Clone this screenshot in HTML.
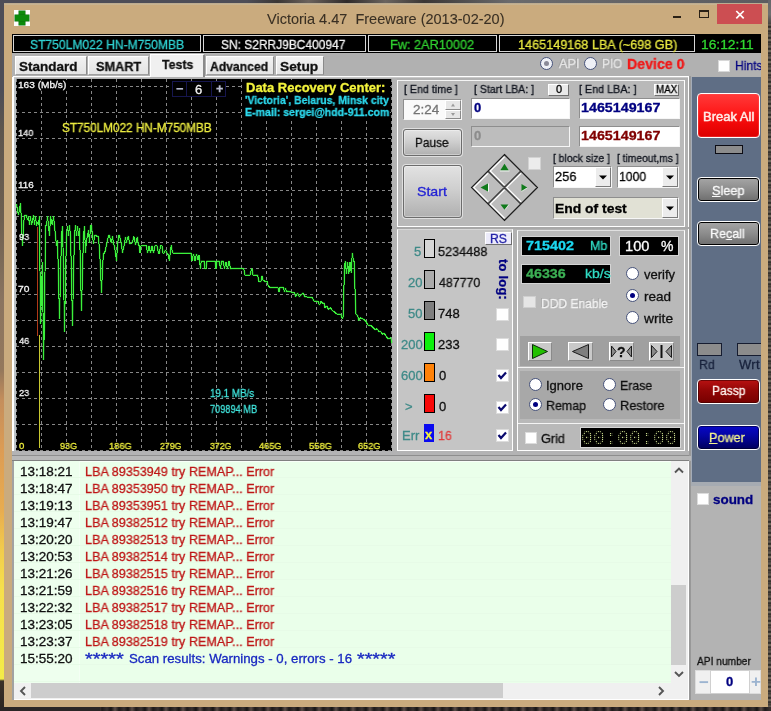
<!DOCTYPE html>
<html lang="en"><head><meta charset="utf-8"><title>Victoria 4.47 Freeware (2013-02-20)</title>
<style>
html,body{margin:0;padding:0}
body{width:771px;height:711px;overflow:hidden;position:relative;background:#2b2522;font-family:'Liberation Sans',sans-serif;font-size:13px}
div{position:absolute;box-sizing:border-box}
.t{white-space:pre;margin:0;padding:0;transform-origin:0 0;will-change:transform;-webkit-text-stroke:0.3px}
.ov{position:absolute;left:0;top:0;pointer-events:none}
u{text-decoration:underline}

</style></head>
<body>
<div style="left:0px;top:0px;width:771px;height:3px;background:linear-gradient(90deg,#4d4d57 0,#4d4d57 32%,#3a3634 36%,#6b625c 40%,#2e2a2a 45%,#6a645f 50%,#3a3634 55%,#6a6a6c 66%,#5c5c60 100%)"></div>
<div style="left:0px;top:0px;width:4px;height:711px;background:linear-gradient(180deg,#4d4d57 0,#4d4d57 90px,#5e564e 130px,#6f6050 220px,#8a7460 300px,#94785c 370px,#c48e5c 400px,#dc9c54 450px,#e8ac50 510px,#f2cc4c 550px,#f6e04c 590px,#f4ec48 679px,#3a3028 681px,#2b2522 100%)"></div>
<div style="left:768px;top:0px;width:3px;height:711px;background:repeating-linear-gradient(180deg,#3a3430 0,#6a6258 3px,#1e1c1a 5px,#8a8070 7px,#2a2624 9px,#5a5248 11px)"></div>
<div style="left:768px;top:0px;width:3px;height:24px;background:linear-gradient(180deg,#66666a 0,#707070 60%,#4a4642 100%)"></div>
<div style="left:0px;top:707px;width:771px;height:4px;background:repeating-linear-gradient(90deg,#1e1a1a 0,#3a3230 5px,#161414 9px,#5a4c46 13px,#1e1a1a 17px)"></div>
<div style="left:0px;top:707px;width:100px;height:4px;background:#2b2626"></div>
<div style="left:4px;top:3px;width:764px;height:704px;background:#caab7e"></div>
<div style="left:4px;top:3px;width:764px;height:2px;background:linear-gradient(180deg,#b8a890 0,#cdb791 100%)"></div>
<div style="left:14px;top:10px;width:16px;height:16px;background:#fdfdfd"></div>
<div style="left:19px;top:11px;width:6px;height:14px;background:#0b8a0b;box-shadow:0 0 0 .5px #0a700a"></div>
<div style="left:15px;top:15px;width:14px;height:6px;background:#0b8a0b;box-shadow:0 0 0 .5px #0a700a"></div>
<div style="left:19px;top:15px;width:6px;height:6px;background:#0b8a0b"></div>
<div style="left:673px;top:16px;width:8px;height:2px;background:#2a2116"></div>
<div style="left:699px;top:10px;width:10px;height:8px;border:1px solid #2a2116;border-top-width:2px"></div>
<div style="left:717px;top:4px;width:45px;height:20px;background:#cc4e52"></div>
<div style="left:12px;top:34px;width:749px;height:666px;background:#b1b1b1"></div>
<div style="left:12px;top:34px;width:749px;height:19px;background:#000"></div>
<div style="left:13px;top:35px;width:188px;height:17px;border:1px solid #d6d6d6"></div>
<div style="left:203px;top:35px;width:163px;height:17px;border:1px solid #d6d6d6"></div>
<div style="left:368px;top:35px;width:129px;height:17px;border:1px solid #d6d6d6"></div>
<div style="left:499px;top:35px;width:196px;height:17px;border:1px solid #d6d6d6"></div>
<div style="left:15px;top:56px;width:72px;height:19px;background:linear-gradient(180deg,#f2f2f2 0,#e4e4e4 100%);border-right:1px solid #8a8a8a;border-bottom:1px solid #a0a0a0;border-left:1px solid #fff;border-top:1px solid #fff"></div>
<div style="left:88px;top:56px;width:61px;height:19px;background:linear-gradient(180deg,#f2f2f2 0,#e4e4e4 100%);border-right:1px solid #8a8a8a;border-bottom:1px solid #a0a0a0;border-left:1px solid #fff;border-top:1px solid #fff"></div>
<div style="left:206px;top:56px;width:68px;height:19px;background:linear-gradient(180deg,#f2f2f2 0,#e4e4e4 100%);border-right:1px solid #8a8a8a;border-bottom:1px solid #a0a0a0;border-left:1px solid #fff;border-top:1px solid #fff"></div>
<div style="left:276px;top:56px;width:48px;height:19px;background:linear-gradient(180deg,#f2f2f2 0,#e4e4e4 100%);border-right:1px solid #8a8a8a;border-bottom:1px solid #a0a0a0;border-left:1px solid #fff;border-top:1px solid #fff"></div>
<div style="left:150px;top:54px;width:55px;height:23px;background:#f0f0f0;border-right:2px solid #8a8a8a;border-left:1px solid #fff;border-top:1px solid #fff"></div>
<div style="left:13px;top:76px;width:137px;height:2px;background:linear-gradient(180deg,#fff 0,#fff 1px,#c8c8c8 1px)"></div>
<div style="left:205px;top:76px;width:484px;height:1px;background:#fff"></div>
<div style="left:205px;top:77px;width:484px;height:1px;background:#c8c8c8"></div>
<div style="left:688px;top:76px;width:1px;height:380px;background:#fff"></div>
<div style="left:689px;top:76px;width:2px;height:380px;background:#9a9a9a"></div>
<div style="left:12px;top:77px;width:2px;height:378px;background:#fff"></div>
<div style="left:14px;top:78px;width:2px;height:377px;background:#bcc2c6"></div>
<div style="left:539.5px;top:57.0px;width:13px;height:13px;border-radius:50%;border:1px solid #46527a;background:#eef0f6"></div>
<div style="left:543.5px;top:61.0px;width:5px;height:5px;border-radius:50%;background:#8a8a98"></div>
<div style="left:583.5px;top:57.0px;width:13px;height:13px;border-radius:50%;border:1px solid #46527a;background:#eef0f6"></div>
<div style="left:718px;top:60px;width:12px;height:12px;background:#fff;border:1px solid #d8d8d8"></div>
<div style="left:730px;top:54px;width:31px;height:22px;overflow:hidden"><div class="t" style="left:4.6px;top:4px;font-size:13px;line-height:16px;color:#000080;transform:scaleX(0.93)">Hints</div></div>
<div style="left:16px;top:79px;width:376px;height:372px;background:#000"></div>
<div style="left:392px;top:78px;width:5px;height:378px;background:#b4b4b4"></div>
<div style="left:12px;top:451px;width:677px;height:4px;background:#b3b3b4"></div>
<div style="left:12px;top:455px;width:677px;height:1px;background:#8e8e8e"></div>
<div style="left:12px;top:456px;width:679px;height:4px;background:#b8b8b8"></div>
<div style="left:12px;top:460px;width:677px;height:1px;background:#808080"></div>
<div style="left:397px;top:80px;width:288px;height:147px;background:#b9b9b9;border:1px solid #fff;border-top-color:#f4f4f4"></div>
<div style="left:397px;top:227px;width:292px;height:2px;background:#a8a8a8"></div>
<div style="left:548px;top:84px;width:21px;height:12px;background:#e9e9e9;border:1px solid;border-color:#fff #6e6e6e #6e6e6e #fff"></div>
<div style="left:654px;top:84px;width:25px;height:12px;background:#e9e9e9;border:1px solid;border-color:#fff #6e6e6e #6e6e6e #fff"></div>
<div style="left:403px;top:99px;width:59px;height:21px;background:#fafafa;border:1px solid;border-color:#8e8e8e #f6f6f6 #f6f6f6 #8e8e8e"></div>
<div style="left:445px;top:100px;width:16px;height:10px;background:#e6e6e6;border:1px solid;border-color:#fff #8a8a8a #8a8a8a #fff"></div>
<div style="left:445px;top:110px;width:16px;height:9px;background:#e6e6e6;border:1px solid;border-color:#fff #8a8a8a #8a8a8a #fff"></div>
<div style="left:471px;top:98px;width:99px;height:21px;background:#fff;border:1px solid;border-color:#8e8e8e #f6f6f6 #f6f6f6 #8e8e8e"></div>
<div style="left:579px;top:98px;width:101px;height:21px;background:#fff;border:1px solid;border-color:#8e8e8e #f6f6f6 #f6f6f6 #8e8e8e"></div>
<div style="left:471px;top:126px;width:99px;height:21px;background:#bdbdbd;border:1px solid;border-color:#8e8e8e #f6f6f6 #f6f6f6 #8e8e8e"></div>
<div style="left:579px;top:126px;width:101px;height:21px;background:#fff;border:1px solid;border-color:#8e8e8e #f6f6f6 #f6f6f6 #8e8e8e"></div>
<div style="left:403px;top:129px;width:59px;height:27px;background:linear-gradient(180deg,#e2e2e2 0,#cfcfcf 45%,#b0b0b0 100%);border:1px solid #6c6c6c;border-radius:3px;box-shadow:0 0 0 1px rgba(255,255,255,.55), inset 0 0 0 1px rgba(255,255,255,.35)"></div>
<div style="left:403px;top:165px;width:59px;height:53px;background:linear-gradient(180deg,#e2e2e2 0,#cfcfcf 45%,#b0b0b0 100%);border:1px solid #6c6c6c;border-radius:3px;box-shadow:0 0 0 1px rgba(255,255,255,.55), inset 0 0 0 1px rgba(255,255,255,.35)"></div>
<div style="left:528px;top:157px;width:13px;height:13px;background:#ececec;border:1px solid #d2d2d2"></div>
<div style="left:553px;top:166px;width:59px;height:22px;background:#fff;border:1px solid;border-color:#8e8e8e #f6f6f6 #f6f6f6 #8e8e8e"></div>
<div style="left:595px;top:167px;width:16px;height:20px;background:#ececec;border:1px solid;border-color:#fff #7a7a7a #7a7a7a #fff"></div>
<div style="left:617px;top:166px;width:62px;height:22px;background:#fff;border:1px solid;border-color:#8e8e8e #f6f6f6 #f6f6f6 #8e8e8e"></div>
<div style="left:662px;top:167px;width:16px;height:20px;background:#ececec;border:1px solid;border-color:#fff #7a7a7a #7a7a7a #fff"></div>
<div style="left:553px;top:197px;width:126px;height:22px;background:#e1e1d5;border:1px solid;border-color:#8e8e8e #f6f6f6 #f6f6f6 #8e8e8e"></div>
<div style="left:662px;top:198px;width:16px;height:20px;background:#ececec;border:1px solid;border-color:#fff #7a7a7a #7a7a7a #fff"></div>
<div style="left:397px;top:229px;width:116px;height:222px;background:#c5c5c5;border:1px solid #fff;border-top-color:#d8d8d8"></div>
<div style="left:485px;top:232px;width:27px;height:13px;background:#ecebfa;border:1px solid;border-color:#fff #6e6e6e #6e6e6e #fff"></div>
<div style="left:424px;top:239px;width:10.5px;height:19px;background:#d6d6d6;border:1px solid #000"></div>
<div style="left:424px;top:270px;width:10.5px;height:19px;background:#ababab;border:1px solid #000"></div>
<div style="left:424px;top:301px;width:10.5px;height:19px;background:#7f7f7f;border:1px solid #000"></div>
<div style="left:424px;top:332px;width:10.5px;height:19px;background:#0df00d;border:1px solid #000"></div>
<div style="left:424px;top:363px;width:10.5px;height:19px;background:#ff8208;border:1px solid #000"></div>
<div style="left:424px;top:394px;width:10.5px;height:19px;background:#f80808;border:1px solid #000"></div>
<div style="left:424px;top:424px;width:10px;height:18px;background:#0a0af0"></div>
<div class="t" style="left:496px;top:259px;width:14px;height:44px;font-size:13px;font-weight:bold;color:#000080;writing-mode:vertical-rl;line-height:14px;letter-spacing:0.2px">to log:</div>
<div style="left:496px;top:308px;width:13px;height:13px;background:#fff;border:1px solid #dcdcdc"></div>
<div style="left:496px;top:338px;width:13px;height:13px;background:#fff;border:1px solid #dcdcdc"></div>
<div style="left:496px;top:369px;width:13px;height:13px;background:#fff;border:1px solid #dcdcdc"></div>
<div style="left:496px;top:401px;width:13px;height:13px;background:#fff;border:1px solid #dcdcdc"></div>
<div style="left:496px;top:429px;width:13px;height:13px;background:#fff;border:1px solid #dcdcdc"></div>
<div style="left:517px;top:230px;width:168px;height:221px;background:#b9b9b9;border:1px solid #fff;border-top-color:#e0e0e0"></div>
<div style="left:521px;top:236px;width:90px;height:20px;background:#000;border:1px solid #d4d4d4"></div>
<div style="left:521px;top:264px;width:90px;height:20px;background:#000;border:1px solid #d4d4d4"></div>
<div style="left:619px;top:236px;width:60px;height:20px;background:#000;border:1px solid #d4d4d4"></div>
<div style="left:523px;top:296px;width:13px;height:12px;background:#e6e6e6;border:1px solid #d0d0d0"></div>
<div style="left:626.2px;top:267.0px;width:13px;height:13px;border-radius:50%;border:1px solid #46527a;background:#fff"></div>
<div style="left:626.2px;top:289.1px;width:13px;height:13px;border-radius:50%;border:1px solid #46527a;background:#fff"></div>
<div style="left:630.2px;top:293.1px;width:5px;height:5px;border-radius:50%;background:#000080"></div>
<div style="left:626.2px;top:311.2px;width:13px;height:13px;border-radius:50%;border:1px solid #46527a;background:#fff"></div>
<div style="left:520px;top:336px;width:160px;height:30px;background:#a0a0a0"></div>
<div style="left:518px;top:367px;width:166px;height:1px;background:#f4f4f4"></div>
<div style="left:528px;top:342px;width:24px;height:19px;background:#c9c9c9;border:1px solid;border-color:#fff #8a8a8a #8a8a8a #fff"></div>
<div style="left:568px;top:342px;width:25px;height:19px;background:#c9c9c9;border:1px solid;border-color:#fff #8a8a8a #8a8a8a #fff"></div>
<div style="left:609px;top:342px;width:25px;height:19px;background:#c9c9c9;border:1px solid;border-color:#fff #8a8a8a #8a8a8a #fff"></div>
<div style="left:649px;top:342px;width:25px;height:19px;background:#c9c9c9;border:1px solid;border-color:#fff #8a8a8a #8a8a8a #fff"></div>
<div style="left:520px;top:371px;width:160px;height:48px;background:#a8a8a8"></div>
<div style="left:518px;top:423px;width:166px;height:1px;background:#f4f4f4"></div>
<div style="left:528.7px;top:377.9px;width:13px;height:13px;border-radius:50%;border:1px solid #46527a;background:#fff"></div>
<div style="left:528.7px;top:397.8px;width:13px;height:13px;border-radius:50%;border:1px solid #46527a;background:#fff"></div>
<div style="left:532.7px;top:401.8px;width:5px;height:5px;border-radius:50%;background:#000080"></div>
<div style="left:602.9px;top:377.9px;width:13px;height:13px;border-radius:50%;border:1px solid #46527a;background:#fff"></div>
<div style="left:602.9px;top:397.8px;width:13px;height:13px;border-radius:50%;border:1px solid #46527a;background:#fff"></div>
<div style="left:525px;top:432px;width:12px;height:12px;background:#fff;border:1px solid #dcdcdc"></div>
<div style="left:580px;top:427px;width:101px;height:21px;background:#000;border:1px solid #d8d8d8"></div>
<div style="left:581px;top:428px;width:99px;height:19px;overflow:hidden"><div class="t" style="left:0px;top:-0.5px;font-family:'Liberation Mono',monospace;font-size:20px;line-height:21px;letter-spacing:0px;color:#c8d88c;-webkit-text-stroke:0">00:00:00</div><div style="left:0;top:0;width:99px;height:19px;background:repeating-linear-gradient(90deg,rgba(0,0,0,.82) 0,rgba(0,0,0,.82) 1px,transparent 1px,transparent 2px),repeating-linear-gradient(180deg,rgba(0,0,0,.82) 0,rgba(0,0,0,.82) 1px,transparent 1px,transparent 2px)"></div></div>
<div style="left:691px;top:77px;width:70px;height:405px;background:#5f6e85;border-left:1px solid #a4acb8"></div>
<div style="left:691px;top:482px;width:70px;height:4px;background:#a6abb2"></div>
<div style="left:691px;top:486px;width:70px;height:214px;background:#b3b3b3"></div>
<div style="left:689px;top:461px;width:2px;height:239px;background:#989898"></div>
<div style="left:697px;top:93px;width:63px;height:45px;background:linear-gradient(180deg,#ff3a3a 0,#ff1c1c 40%,#f00808 70%,#dc0000 100%);border:1px solid #fff;border-radius:4px;box-shadow:inset 0 0 0 1px rgba(255,80,80,.4)"></div>
<div style="left:715px;top:145px;width:28px;height:9px;background:#8c8c8c;border:1px solid #0c0c14"></div>
<div style="left:697px;top:177px;width:63px;height:25px;background:linear-gradient(180deg,#a6a6a6 0,#8c8c8c 50%,#6e6e6e 100%);border:1px solid #fff;border-radius:4px;box-shadow:inset 0 0 0 1px #000"></div>
<div style="left:697px;top:221px;width:63px;height:25px;background:linear-gradient(180deg,#a6a6a6 0,#8c8c8c 50%,#6e6e6e 100%);border:1px solid #fff;border-radius:4px;box-shadow:inset 0 0 0 1px #000"></div>
<div style="left:697px;top:343px;width:25px;height:13px;background:#8c8c8c;border:1px solid #161c30"></div>
<div style="left:737px;top:343px;width:25px;height:13px;background:#8c8c8c;border:1px solid #161c30"></div>
<div style="left:761px;top:343px;width:7px;height:13px;background:#caab7e"></div>
<div style="left:735px;top:356px;width:26px;height:18px;overflow:hidden"><div class="t" style="left:4px;top:0px;font-size:13px;line-height:17px;color:#18223c;letter-spacing:0.3px">Wrt</div></div>
<div style="left:697px;top:379px;width:63px;height:25px;background:linear-gradient(180deg,#b81212 0,#920606 45%,#760000 100%);border:1px solid #fff;border-radius:4px;box-shadow:inset 0 0 0 1px rgba(60,0,0,.6)"></div>
<div style="left:697px;top:425px;width:63px;height:25px;background:linear-gradient(180deg,#0808c8 0,#0404a0 45%,#00005c 100%);border:1px solid #fff;border-radius:4px;box-shadow:inset 0 0 0 1px rgba(0,0,40,.6)"></div>
<div style="left:697px;top:493px;width:12px;height:12px;background:#fff;border:1px solid #dcdcdc"></div>
<div style="left:695px;top:670px;width:66px;height:24px;background:#f0f0f0;border:1px solid #dcdcdc"></div>
<div style="left:710px;top:670px;width:40px;height:24px;background:#fff;border:1px solid #d0d0d0"></div>
<div style="left:750px;top:671px;width:11px;height:22px;overflow:hidden"><div class="t" style="left:0.5px;top:0.5px;font-size:17px;line-height:20px;font-weight:bold;color:#9cb4d0;-webkit-text-stroke:0">+</div></div>
<div style="left:12px;top:461px;width:677px;height:239px;background:#fff;border-left:2px solid #a2a2a2"></div>
<div style="left:14px;top:461px;width:657px;height:222px;background:#eaffea;border-top:1px solid #f8fff8"></div>
<div style="left:14px;top:461px;width:66px;height:222px;background:#eeffee;border-right:1px solid #f4fff4"></div>
<div style="left:14px;top:461px;width:657px;height:222px;overflow:hidden"><div style="left:0;top:16px;width:657px;height:1px;background:#e7fbe7"></div><div style="left:0;top:33px;width:657px;height:1px;background:#e7fbe7"></div><div style="left:0;top:50px;width:657px;height:1px;background:#e7fbe7"></div><div style="left:0;top:67px;width:657px;height:1px;background:#e7fbe7"></div><div style="left:0;top:84px;width:657px;height:1px;background:#e7fbe7"></div><div style="left:0;top:101px;width:657px;height:1px;background:#e7fbe7"></div><div style="left:0;top:118px;width:657px;height:1px;background:#e7fbe7"></div><div style="left:0;top:135px;width:657px;height:1px;background:#e7fbe7"></div><div style="left:0;top:152px;width:657px;height:1px;background:#e7fbe7"></div><div style="left:0;top:169px;width:657px;height:1px;background:#e7fbe7"></div><div style="left:0;top:186px;width:657px;height:1px;background:#e7fbe7"></div><div style="left:0;top:203px;width:657px;height:1px;background:#e7fbe7"></div><div style="left:0;top:220px;width:657px;height:1px;background:#e7fbe7"></div></div>
<div style="left:671px;top:461px;width:17px;height:222px;background:#f0f0f0"></div>
<div style="left:671px;top:585px;width:15px;height:80px;background:#cdcdcd"></div>
<div style="left:14px;top:683px;width:674px;height:16px;background:#f0f0f0"></div>
<div style="left:31px;top:683px;width:472px;height:15px;background:#cdcdcd"></div>
<svg class="ov" width="771" height="711" viewBox="0 0 771 711">
<path d="M736.3 11 L743.7 18.4 M743.7 11 L736.3 18.4" stroke="#fff" stroke-width="1.7" fill="none"/>
<path d="M16.5 79V451M41.5 79V451M66.5 79V451M91.5 79V451M116.5 79V451M141.5 79V451M166.5 79V451M191.5 79V451M216.5 79V451M241.5 79V451M266.5 79V451M291.5 79V451M316.5 79V451M341.5 79V451M366.5 79V451M391.5 79V451M16 86.5H392M16 112.5H392M16 138.5H392M16 164.5H392M16 190.5H392M16 216.5H392M16 242.5H392M16 268.5H392M16 294.5H392M16 320.5H392M16 346.5H392M16 372.5H392M16 398.5H392M16 424.5H392M16 450.5H392" stroke="#868686" stroke-width="1" stroke-dasharray="3 3" fill="none" shape-rendering="crispEdges"/>
<rect x="244" y="80" width="146" height="39" fill="#000"/>
<rect x="17" y="80" width="51" height="10" fill="#000"/>
<path d="M37.5 227V336" stroke="#b03a18" stroke-width="1" fill="none" shape-rendering="crispEdges"/>
<path d="M39.5 335V448" stroke="#c8c830" stroke-width="1" fill="none" shape-rendering="crispEdges"/>
<polyline points="16.5,204 17.5,210 18.5,215 19.5,209 20.5,203 21.5,222 22.5,246 23.5,226 24.5,215 25.5,216 26.5,215 27.5,220 28.5,216 29.5,225 30.5,216 31.5,225 32.5,221 33.5,215 34.5,225 35.5,216 36.5,226 37.5,222 38.5,225 39.5,216 40.5,324 41.5,290 42.5,262 43.5,360 44.5,322 45.5,225 46.5,226 47.5,216 48.5,226 49.5,236 50.5,216 51.5,222 52.5,225 53.5,216 54.5,226 55.5,236 56.5,246 57.5,240 58.5,277 59.5,319 60.5,277 61.5,236 62.5,226 63.5,267 64.5,332 65.5,278 66.5,236 67.5,226 68.5,236 69.5,225 70.5,236 71.5,275 72.5,326 73.5,275 74.5,236 75.5,225 76.5,236 77.5,226 78.5,236 79.5,228 80.5,270 81.5,311 82.5,270 83.5,236 84.5,226 85.5,253 86.5,240 87.5,236 88.5,230 89.5,243 90.5,226 91.5,225 92.5,236 93.5,244 94.5,236 95.5,235 96.5,236 97.5,236 98.5,237 99.5,250 100.5,268 101.5,293 102.5,268 103.5,253 104.5,253 105.5,250 106.5,245 107.5,240 108.5,236 109.5,235 110.5,240 111.5,243 112.5,236 113.5,244 114.5,246 115.5,253 116.5,261 117.5,246 118.5,236 119.5,235 120.5,240 121.5,244 122.5,253 123.5,248 124.5,244 125.5,237 126.5,243 127.5,238 128.5,236 129.5,244 130.5,243 131.5,243 132,243 134,236.6 135.5,245 137.4,236.6 138.3,245 139,245 140,253 141,245.8 146.5,245.8 147.5,253 149,245.8 150.5,253 152,245.8 153.5,253 155,245.8 157,245.8 158.5,253 159.5,253 160.5,245.8 162,245.8 163,253 164,253 165.5,250 167,253 168.5,255 169.3,261 170.2,253 171.2,245 172,250 173,253 191,253 192,261 193.5,254 195,261 196.5,254 198,260 199,255 199.3,258 200.4,268.6 201.3,261 204,261 205,268.6 206,268.6 207,261 215,261 216,268.6 217,261 219,261 220.5,268.6 221.5,261 223,261 224.5,268.6 226,262 227.5,269 229,261 230.5,269 231.5,268.6 243,268.6 244,270 245,275 250,275 251,271 252,268.6 253,275 257.5,275 259,281.4 261,281.4 262,275.7 263,280 265,281.4 267,281.4 268,285 269,286.7 270.5,287.6 278,287.6 279,292 280,287.6 283.5,287.6 284.5,292 285.5,288 286.5,292 287.4,291 294.7,293 295.6,296.7 297.5,293 299.3,296.7 303,293 304.8,296.7 312,297.6 314,301 316,301 318.5,302 319.4,305 321,301.5 322.5,303 324,303 325,307.7 326.7,306 328.5,309.5 330.4,307.7 332.2,310.5 334,311.5 336.8,314 340.4,314 341.4,316 342.3,318.7 343.2,317 343.7,297.6 344.5,266.6 345.4,261 346.4,274 347.6,262 348.8,274 350,262 351.2,273 352.3,252.9 353.4,260 354.2,262 355,288.5 356,314 357.8,316 358.7,320.5 360.5,317.7 364,319.5 366,321.5 367.9,325 371.5,326 373,327.5 375.2,329.6 377,328.7 378.8,331.5 380.6,331.5 382.5,334.2 384.3,333.3 386,336 388,338.8 390.7,337.9 392,343.3" stroke="#30e030" stroke-opacity=".32" stroke-width="2" fill="none" stroke-linejoin="bevel"/>
<polyline points="16.5,204 17.5,210 18.5,215 19.5,209 20.5,203 21.5,222 22.5,246 23.5,226 24.5,215 25.5,216 26.5,215 27.5,220 28.5,216 29.5,225 30.5,216 31.5,225 32.5,221 33.5,215 34.5,225 35.5,216 36.5,226 37.5,222 38.5,225 39.5,216 40.5,324 41.5,290 42.5,262 43.5,360 44.5,322 45.5,225 46.5,226 47.5,216 48.5,226 49.5,236 50.5,216 51.5,222 52.5,225 53.5,216 54.5,226 55.5,236 56.5,246 57.5,240 58.5,277 59.5,319 60.5,277 61.5,236 62.5,226 63.5,267 64.5,332 65.5,278 66.5,236 67.5,226 68.5,236 69.5,225 70.5,236 71.5,275 72.5,326 73.5,275 74.5,236 75.5,225 76.5,236 77.5,226 78.5,236 79.5,228 80.5,270 81.5,311 82.5,270 83.5,236 84.5,226 85.5,253 86.5,240 87.5,236 88.5,230 89.5,243 90.5,226 91.5,225 92.5,236 93.5,244 94.5,236 95.5,235 96.5,236 97.5,236 98.5,237 99.5,250 100.5,268 101.5,293 102.5,268 103.5,253 104.5,253 105.5,250 106.5,245 107.5,240 108.5,236 109.5,235 110.5,240 111.5,243 112.5,236 113.5,244 114.5,246 115.5,253 116.5,261 117.5,246 118.5,236 119.5,235 120.5,240 121.5,244 122.5,253 123.5,248 124.5,244 125.5,237 126.5,243 127.5,238 128.5,236 129.5,244 130.5,243 131.5,243 132,243 134,236.6 135.5,245 137.4,236.6 138.3,245 139,245 140,253 141,245.8 146.5,245.8 147.5,253 149,245.8 150.5,253 152,245.8 153.5,253 155,245.8 157,245.8 158.5,253 159.5,253 160.5,245.8 162,245.8 163,253 164,253 165.5,250 167,253 168.5,255 169.3,261 170.2,253 171.2,245 172,250 173,253 191,253 192,261 193.5,254 195,261 196.5,254 198,260 199,255 199.3,258 200.4,268.6 201.3,261 204,261 205,268.6 206,268.6 207,261 215,261 216,268.6 217,261 219,261 220.5,268.6 221.5,261 223,261 224.5,268.6 226,262 227.5,269 229,261 230.5,269 231.5,268.6 243,268.6 244,270 245,275 250,275 251,271 252,268.6 253,275 257.5,275 259,281.4 261,281.4 262,275.7 263,280 265,281.4 267,281.4 268,285 269,286.7 270.5,287.6 278,287.6 279,292 280,287.6 283.5,287.6 284.5,292 285.5,288 286.5,292 287.4,291 294.7,293 295.6,296.7 297.5,293 299.3,296.7 303,293 304.8,296.7 312,297.6 314,301 316,301 318.5,302 319.4,305 321,301.5 322.5,303 324,303 325,307.7 326.7,306 328.5,309.5 330.4,307.7 332.2,310.5 334,311.5 336.8,314 340.4,314 341.4,316 342.3,318.7 343.2,317 343.7,297.6 344.5,266.6 345.4,261 346.4,274 347.6,262 348.8,274 350,262 351.2,273 352.3,252.9 353.4,260 354.2,262 355,288.5 356,314 357.8,316 358.7,320.5 360.5,317.7 364,319.5 366,321.5 367.9,325 371.5,326 373,327.5 375.2,329.6 377,328.7 378.8,331.5 380.6,331.5 382.5,334.2 384.3,333.3 386,336 388,338.8 390.7,337.9 392,343.3" stroke="#3cf03c" stroke-width="1" fill="none" stroke-linejoin="bevel" shape-rendering="crispEdges"/>
<rect x="172.5" y="81.5" width="14" height="15" fill="#000" stroke="#16164e" stroke-width="1"/>
<rect x="186.5" y="81.5" width="25" height="15" fill="#000" stroke="#16164e" stroke-width="1"/>
<rect x="211.5" y="81.5" width="14" height="15" fill="#000" stroke="#16164e" stroke-width="1"/>
<path d="M451 106.5L453 103.5L455 106.5Z M451 113L453 116L455 113Z" fill="#9a9a9a"/>
<path d="M599 175.5H607L603 179.5Z" fill="#000"/>
<path d="M666 175.5H674L670 179.5Z" fill="#000"/>
<path d="M666 206.5H674L670 210.5Z" fill="#000"/>
<path d="M504.5 154.5L537.5 187.5L504.5 220.5L471.5 187.5Z" fill="#bcbcbc" stroke="#141414" stroke-width="1.1"/>
<path d="M504.5 155.0L520.5 171.0L504.5 187.0L488.5 171.0Z" fill="#bdbdbd" stroke="#141414" stroke-width="1"/>
<path d="M504.5 156.7L490.2 171.0L504.5 185.3" stroke="#fff" stroke-width="1.3" fill="none"/>
<path d="M488.0 171.5L504.0 187.5L488.0 203.5L472.0 187.5Z" fill="#bdbdbd" stroke="#141414" stroke-width="1"/>
<path d="M488.0 173.2L473.7 187.5L488.0 201.8" stroke="#fff" stroke-width="1.3" fill="none"/>
<path d="M521.0 171.5L537.0 187.5L521.0 203.5L505.0 187.5Z" fill="#bdbdbd" stroke="#141414" stroke-width="1"/>
<path d="M521.0 173.2L506.7 187.5L521.0 201.8" stroke="#fff" stroke-width="1.3" fill="none"/>
<path d="M504.5 188.0L520.5 204.0L504.5 220.0L488.5 204.0Z" fill="#bdbdbd" stroke="#141414" stroke-width="1"/>
<path d="M504.5 189.7L490.2 204.0L504.5 218.3" stroke="#fff" stroke-width="1.3" fill="none"/>
<path d="M500.2 170.5L504.5 163.7L508.8 170.5Z" fill="#0f7a1a"/><path d="M500.0 171.0H509.5" stroke="#eef6ee" stroke-width="1" fill="none"/>
<path d="M500.5 204.5L504.5 209.7L508.5 204.5Z" fill="#0f7a1a"/><path d="M505.1 209.7L509.1 204.5" stroke="#dfeede" stroke-width=".8" fill="none"/>
<path d="M488.0 183.5L480.5 187.5L488.0 191.5Z" fill="#0f7a1a"/><path d="M488.5 183.5V191.8" stroke="#eef6ee" stroke-width="1" fill="none"/>
<path d="M521.5 183.9L527.3 187.5L521.5 191.1Z" fill="#0f7a1a"/><path d="M527.3 188.0L521.5 191.5" stroke="#dfeede" stroke-width=".8" fill="none"/>
<path d="M498.5 375L501 378L506 372.5" stroke="#0a0a6e" stroke-width="2.2" fill="none"/>
<path d="M498.5 407L501 410L506 404.5" stroke="#0a0a6e" stroke-width="2.2" fill="none"/>
<path d="M498.5 435L501 438L506 432.5" stroke="#0a0a6e" stroke-width="2.2" fill="none"/>
<path d="M532.5 344.5L547.5 351.5L532.5 358.5Z" fill="#22c000" stroke="#0a2a0a" stroke-width="1"/>
<path d="M588.5 344.5L572.5 351.5L588.5 358.5Z" fill="#7e7e7e" stroke="#1a1a1a" stroke-width="1"/>
<path d="M611.5 346L616 351.5L611.5 357Z M631.5 346L627 351.5L631.5 357Z" fill="#8a8a8a" stroke="#1a1a1a" stroke-width="1"/>
<path d="M651.5 345.5L657 351.5L651.5 357.5Z M671.5 345.5L666 351.5L671.5 357.5Z" fill="#8a8a8a" stroke="#1a1a1a" stroke-width="1"/>
<path d="M661.5 345V358" stroke="#101010" stroke-width="2" fill="none"/>
<path d="M675 472.5L679 468.5L683 472.5 M675 672L679 676L683 672 M25 687L21 691L25 695 M659 687L663 691L659 695" stroke="#555" stroke-width="1.9" fill="none"/>
</svg>
<div class="t" style="left:266.8px;top:10.0px;font-size:14.5px;line-height:18px;color:#3a3024;-webkit-text-stroke:0.1px;">Victoria 4.47  Freeware (2013-02-20)</div>
<div class="t" style="left:29.9px;top:36.0px;font-size:13px;line-height:17px;color:#2fd0d0;transform:scaleX(0.932);">ST750LM022 HN-M750MBB</div>
<div class="t" style="left:220.8px;top:36.0px;font-size:13px;line-height:17px;color:#f2f2f2;transform:scaleX(0.92);">SN: S2RRJ9BC400947</div>
<div class="t" style="left:389.5px;top:36.0px;font-size:13px;line-height:17px;color:#30d030;transform:scaleX(0.979);">Fw: 2AR10002</div>
<div class="t" style="left:518.0px;top:36.0px;font-size:13px;line-height:17px;color:#e6e640;transform:scaleX(0.973);">1465149168 LBA (~698 GB)</div>
<div class="t" style="left:701.4px;top:36.0px;font-size:13px;line-height:17px;color:#30d830;transform:scaleX(1.062);">16:12:11</div>
<div class="t" style="left:19.0px;top:58.0px;font-size:13px;line-height:17px;color:#101010;font-weight:bold;transform:scaleX(1.036);">Standard</div>
<div class="t" style="left:96.0px;top:58.0px;font-size:13px;line-height:17px;color:#101010;font-weight:bold;transform:scaleX(0.978);">SMART</div>
<div class="t" style="left:161.7px;top:56.0px;font-size:13px;line-height:17px;color:#101010;font-weight:bold;transform:scaleX(0.948);">Tests</div>
<div class="t" style="left:210.0px;top:58.0px;font-size:13px;line-height:17px;color:#101010;font-weight:bold;transform:scaleX(0.935);">Advanced</div>
<div class="t" style="left:279.9px;top:58.0px;font-size:13px;line-height:17px;color:#101010;font-weight:bold;transform:scaleX(1.057);">Setup</div>
<div class="t" style="left:559.0px;top:56.0px;font-size:12px;line-height:16px;color:#e4e4e4;transform:scaleX(1.056);text-shadow:-1px -1px 0 #a0a0a0;">API</div>
<div class="t" style="left:601.5px;top:56.0px;font-size:12px;line-height:16px;color:#e4e4e4;transform:scaleX(0.974);text-shadow:-1px -1px 0 #a0a0a0;">PIO</div>
<div class="t" style="left:627.1px;top:53.7px;font-size:15px;line-height:19px;color:#f01818;font-weight:bold;transform:scaleX(0.944);">Device 0</div>
<div class="t" style="left:17.5px;top:78.0px;font-size:9.6px;line-height:13px;color:#f4f4f4;transform:scaleX(1.053);">163 (Mb/s)</div>
<div class="t" style="left:17.6px;top:126.2px;font-size:9.6px;line-height:13px;color:#f4f4f4;transform:scaleX(0.96);">140</div>
<div class="t" style="left:17.6px;top:178.4px;font-size:9.6px;line-height:13px;color:#f4f4f4;transform:scaleX(1.029);">116</div>
<div class="t" style="left:18.6px;top:230.2px;font-size:9.6px;line-height:13px;color:#f4f4f4;transform:scaleX(0.96);">93</div>
<div class="t" style="left:17.5px;top:282.2px;font-size:9.6px;line-height:13px;color:#f4f4f4;transform:scaleX(1.067);">70</div>
<div class="t" style="left:18.6px;top:334.2px;font-size:9.6px;line-height:13px;color:#f4f4f4;transform:scaleX(0.96);">46</div>
<div class="t" style="left:18.6px;top:386.2px;font-size:9.6px;line-height:13px;color:#f4f4f4;transform:scaleX(0.96);">23</div>
<div class="t" style="left:19.1px;top:439.0px;font-size:9.6px;line-height:13px;color:#ecec3c;">0</div>
<div class="t" style="left:59.5px;top:439.0px;font-size:9.6px;line-height:13px;color:#ecec3c;transform:scaleX(0.939);">93G</div>
<div class="t" style="left:108.7px;top:439.0px;font-size:9.6px;line-height:13px;color:#ecec3c;transform:scaleX(0.968);">186G</div>
<div class="t" style="left:160.0px;top:439.0px;font-size:9.6px;line-height:13px;color:#ecec3c;transform:scaleX(0.913);">279G</div>
<div class="t" style="left:210.0px;top:439.0px;font-size:9.6px;line-height:13px;color:#ecec3c;transform:scaleX(0.913);">372G</div>
<div class="t" style="left:259.0px;top:439.0px;font-size:9.6px;line-height:13px;color:#ecec3c;transform:scaleX(0.957);">465G</div>
<div class="t" style="left:308.5px;top:439.0px;font-size:9.6px;line-height:13px;color:#ecec3c;transform:scaleX(0.977);">558G</div>
<div class="t" style="left:358.0px;top:439.0px;font-size:9.6px;line-height:13px;color:#ecec3c;transform:scaleX(0.957);">652G</div>
<div class="t" style="left:62.0px;top:120.0px;font-size:12px;line-height:16px;color:#ecec40;transform:scaleX(0.98);">ST750LM022 HN-M750MBB</div>
<div class="t" style="left:245.7px;top:79.0px;font-size:13px;line-height:17px;color:#f4f43c;font-weight:bold;">Data Recovery Center:</div>
<div class="t" style="left:245.0px;top:93.0px;font-size:11px;line-height:14px;color:#2cd8ec;font-weight:bold;transform:scaleX(0.952);">'Victoria', Belarus, Minsk city</div>
<div class="t" style="left:244.5px;top:105.0px;font-size:11px;line-height:14px;color:#2cd8ec;font-weight:bold;transform:scaleX(0.962);">E-mail: sergei@hdd-911.com</div>
<div class="t" style="left:209.5px;top:386.0px;font-size:11px;line-height:14px;color:#40e4dc;transform:scaleX(0.892);">19,1 MB/s</div>
<div class="t" style="left:209.6px;top:402.0px;font-size:11px;line-height:14px;color:#40e4dc;transform:scaleX(0.838);">709894 MB</div>
<div class="t" style="left:175.5px;top:81.0px;font-size:12.5px;line-height:16px;color:#bcc0d4;font-weight:bold;">−</div>
<div class="t" style="left:215.5px;top:81.0px;font-size:12.5px;line-height:16px;color:#bcc0d4;font-weight:bold;">+</div>
<div class="t" style="left:194.5px;top:81.0px;font-size:13px;line-height:17px;color:#f4f4f4;">6</div>
<div class="t" style="left:404.4px;top:82.3px;font-size:11px;line-height:14px;color:#10141e;transform:scaleX(0.97);">[ End time ]</div>
<div class="t" style="left:474.2px;top:82.3px;font-size:11px;line-height:14px;color:#10141e;transform:scaleX(0.964);">[ Start LBA: ]</div>
<div class="t" style="left:579.2px;top:82.3px;font-size:11px;line-height:14px;color:#10141e;transform:scaleX(0.979);">[ End LBA: ]</div>
<div class="t" style="left:556.0px;top:82.3px;font-size:11px;line-height:14px;color:#000;">0</div>
<div class="t" style="left:656.1px;top:82.3px;font-size:11px;line-height:14px;color:#000;transform:scaleX(0.891);">MAX</div>
<div class="t" style="left:412.7px;top:101.0px;font-size:13.5px;line-height:17px;color:#747474;">2:24</div>
<div class="t" style="left:473.5px;top:99.0px;font-size:13px;line-height:17px;color:#000080;font-weight:bold;">0</div>
<div class="t" style="left:580.9px;top:99.0px;font-size:13px;line-height:17px;color:#000080;font-weight:bold;transform:scaleX(1.099);">1465149167</div>
<div class="t" style="left:473.5px;top:127.0px;font-size:13px;line-height:17px;color:#8c8c8c;font-weight:bold;">0</div>
<div class="t" style="left:580.9px;top:127.0px;font-size:13px;line-height:17px;color:#800000;font-weight:bold;transform:scaleX(1.099);">1465149167</div>
<div class="t" style="left:414.5px;top:133.7px;font-size:13px;line-height:17px;color:#101010;transform:scaleX(0.906);">Pause</div>
<div class="t" style="left:417.1px;top:183.0px;font-size:13px;line-height:17px;color:#2222d4;transform:scaleX(1.088);">Start</div>
<div class="t" style="left:553.1px;top:151.0px;font-size:11px;line-height:14px;color:#10141e;transform:scaleX(0.942);">[ block size ]</div>
<div class="t" style="left:616.5px;top:151.0px;font-size:11px;line-height:14px;color:#10141e;transform:scaleX(0.932);">[ timeout,ms ]</div>
<div class="t" style="left:554.6px;top:168.0px;font-size:13px;line-height:17px;color:#000;transform:scaleX(0.985);">256</div>
<div class="t" style="left:619.1px;top:168.0px;font-size:13px;line-height:17px;color:#000;transform:scaleX(0.936);">1000</div>
<div class="t" style="left:555.1px;top:199.6px;font-size:13px;line-height:17px;color:#000;font-weight:bold;transform:scaleX(1.068);">End of test</div>
<div class="t" style="left:489.7px;top:230.5px;font-size:12px;line-height:16px;color:#2626a8;transform:scaleX(1.02);">RS</div>
<div class="t" style="left:414.4px;top:243.0px;font-size:13px;line-height:17px;color:#3f8a88;">5</div>
<div class="t" style="left:437.6px;top:243.0px;font-size:13px;line-height:17px;color:#101010;transform:scaleX(0.973);">5234488</div>
<div class="t" style="left:407.8px;top:274.0px;font-size:13px;line-height:17px;color:#3f8a88;">20</div>
<div class="t" style="left:438.6px;top:274.0px;font-size:13px;line-height:17px;color:#101010;transform:scaleX(0.949);">487770</div>
<div class="t" style="left:407.8px;top:305.0px;font-size:13px;line-height:17px;color:#3f8a88;">50</div>
<div class="t" style="left:437.6px;top:305.0px;font-size:13px;line-height:17px;color:#101010;">748</div>
<div class="t" style="left:400.7px;top:336.0px;font-size:13px;line-height:17px;color:#3f8a88;">200</div>
<div class="t" style="left:437.6px;top:336.0px;font-size:13px;line-height:17px;color:#101010;">233</div>
<div class="t" style="left:400.7px;top:367.0px;font-size:13px;line-height:17px;color:#3f8a88;">600</div>
<div class="t" style="left:438.6px;top:367.0px;font-size:13px;line-height:17px;color:#101010;">0</div>
<div class="t" style="left:405.0px;top:398.0px;font-size:13px;line-height:17px;color:#3f8a88;">&gt;</div>
<div class="t" style="left:438.6px;top:398.0px;font-size:13px;line-height:17px;color:#101010;">0</div>
<div class="t" style="left:402.0px;top:427.0px;font-size:13px;line-height:17px;color:#3f8a88;transform:scaleX(0.981);">Err</div>
<div class="t" style="left:437.6px;top:427.0px;font-size:13px;line-height:17px;color:#e03c3c;transform:scaleX(0.954);">16</div>
<div class="t" style="left:425.0px;top:426.0px;font-size:13px;line-height:17px;color:#f4f43c;font-weight:bold;">x</div>
<div class="t" style="left:526.0px;top:237.0px;font-size:13px;line-height:17px;color:#1cd8f0;font-weight:bold;transform:scaleX(1.107);">715402</div>
<div class="t" style="left:590.4px;top:237.0px;font-size:13px;line-height:17px;color:#30dcc4;transform:scaleX(0.959);">Mb</div>
<div class="t" style="left:526.0px;top:265.0px;font-size:13px;line-height:17px;color:#3cb054;font-weight:bold;transform:scaleX(1.1);">46336</div>
<div class="t" style="left:584.5px;top:265.0px;font-size:13px;line-height:17px;color:#30dcc4;transform:scaleX(1.077);">kb/s</div>
<div class="t" style="left:624.7px;top:237.0px;font-size:14px;line-height:18px;color:#fafafa;transform:scaleX(1.045);">100</div>
<div class="t" style="left:660.6px;top:237.0px;font-size:14px;line-height:18px;color:#fafafa;">%</div>
<div class="t" style="left:540.7px;top:294.5px;font-size:13px;line-height:17px;color:#f2f2f2;transform:scaleX(0.924);text-shadow:-1px -1px 0 #a4a4a4;">DDD Enable</div>
<div class="t" style="left:644.0px;top:265.5px;font-size:13px;line-height:17px;color:#101010;">verify</div>
<div class="t" style="left:643.5px;top:287.6px;font-size:13px;line-height:17px;color:#101010;transform:scaleX(1.037);">read</div>
<div class="t" style="left:644.0px;top:309.7px;font-size:13px;line-height:17px;color:#101010;transform:scaleX(1.059);">write</div>
<div class="t" style="left:616.5px;top:343.0px;font-size:14px;line-height:18px;color:#101010;font-weight:bold;">?</div>
<div class="t" style="left:546.4px;top:377.2px;font-size:13px;line-height:17px;color:#101010;">Ignore</div>
<div class="t" style="left:546.4px;top:397.2px;font-size:13px;line-height:17px;color:#101010;transform:scaleX(0.954);">Remap</div>
<div class="t" style="left:620.4px;top:377.2px;font-size:13px;line-height:17px;color:#101010;transform:scaleX(0.948);">Erase</div>
<div class="t" style="left:620.3px;top:397.2px;font-size:13px;line-height:17px;color:#101010;transform:scaleX(0.98);">Restore</div>
<div class="t" style="left:541.3px;top:430.0px;font-size:13px;line-height:17px;color:#101010;transform:scaleX(0.974);">Grid</div>
<div class="t" style="left:702.6px;top:108.0px;font-size:13px;line-height:17px;color:#ffe9e4;text-shadow:0 0 1px #ffd0d0;">Break All</div>
<div class="t" style="left:711.5px;top:181.5px;font-size:13px;line-height:17px;color:#fafafa;transform:scaleX(0.978);"><u>S</u>leep</div>
<div class="t" style="left:710.3px;top:225.0px;font-size:13px;line-height:17px;color:#fafafa;transform:scaleX(0.957);">Re<u>c</u>all</div>
<div class="t" style="left:698.6px;top:355.8px;font-size:13px;line-height:17px;color:#18223c;transform:scaleX(0.947);">Rd</div>
<div class="t" style="left:711.6px;top:382.2px;font-size:13px;line-height:17px;color:#fff4f0;transform:scaleX(0.923);">Passp</div>
<div class="t" style="left:709.0px;top:428.7px;font-size:13px;line-height:17px;color:#f2f290;transform:scaleX(0.972);"><u>P</u>ower</div>
<div class="t" style="left:713.3px;top:490.5px;font-size:13px;line-height:17px;color:#000080;font-weight:bold;transform:scaleX(1.032);">sound</div>
<div class="t" style="left:696.7px;top:654.0px;font-size:11px;line-height:14px;color:#101010;transform:scaleX(0.926);">API number</div>
<div class="t" style="left:698.5px;top:671.5px;font-size:17px;line-height:21px;color:#9cb4d0;font-weight:bold;-webkit-text-stroke:0;">−</div>
<div class="t" style="left:726.0px;top:673.0px;font-size:13px;line-height:17px;color:#000080;font-weight:bold;">0</div>
<div class="t" style="left:19.7px;top:463.0px;font-size:13px;line-height:17px;color:#101010;transform:scaleX(1.039);">13:18:21</div>
<div class="t" style="left:84.5px;top:463.0px;font-size:13px;line-height:17px;color:#be1616;transform:scaleX(0.971);">LBA 89353949 try REMAP... Error</div>
<div class="t" style="left:19.7px;top:480.0px;font-size:13px;line-height:17px;color:#101010;transform:scaleX(1.039);">13:18:47</div>
<div class="t" style="left:84.5px;top:480.0px;font-size:13px;line-height:17px;color:#be1616;transform:scaleX(0.971);">LBA 89353950 try REMAP... Error</div>
<div class="t" style="left:19.7px;top:497.0px;font-size:13px;line-height:17px;color:#101010;transform:scaleX(1.039);">13:19:13</div>
<div class="t" style="left:84.5px;top:497.0px;font-size:13px;line-height:17px;color:#be1616;transform:scaleX(0.971);">LBA 89353951 try REMAP... Error</div>
<div class="t" style="left:19.7px;top:514.0px;font-size:13px;line-height:17px;color:#101010;transform:scaleX(1.039);">13:19:47</div>
<div class="t" style="left:84.5px;top:514.0px;font-size:13px;line-height:17px;color:#be1616;transform:scaleX(0.971);">LBA 89382512 try REMAP... Error</div>
<div class="t" style="left:19.7px;top:531.0px;font-size:13px;line-height:17px;color:#101010;transform:scaleX(1.039);">13:20:20</div>
<div class="t" style="left:84.5px;top:531.0px;font-size:13px;line-height:17px;color:#be1616;transform:scaleX(0.971);">LBA 89382513 try REMAP... Error</div>
<div class="t" style="left:19.7px;top:548.0px;font-size:13px;line-height:17px;color:#101010;transform:scaleX(1.039);">13:20:53</div>
<div class="t" style="left:84.5px;top:548.0px;font-size:13px;line-height:17px;color:#be1616;transform:scaleX(0.971);">LBA 89382514 try REMAP... Error</div>
<div class="t" style="left:19.7px;top:565.0px;font-size:13px;line-height:17px;color:#101010;transform:scaleX(1.039);">13:21:26</div>
<div class="t" style="left:84.5px;top:565.0px;font-size:13px;line-height:17px;color:#be1616;transform:scaleX(0.971);">LBA 89382515 try REMAP... Error</div>
<div class="t" style="left:19.7px;top:582.0px;font-size:13px;line-height:17px;color:#101010;transform:scaleX(1.039);">13:21:59</div>
<div class="t" style="left:84.5px;top:582.0px;font-size:13px;line-height:17px;color:#be1616;transform:scaleX(0.971);">LBA 89382516 try REMAP... Error</div>
<div class="t" style="left:19.7px;top:599.0px;font-size:13px;line-height:17px;color:#101010;transform:scaleX(1.039);">13:22:32</div>
<div class="t" style="left:84.5px;top:599.0px;font-size:13px;line-height:17px;color:#be1616;transform:scaleX(0.971);">LBA 89382517 try REMAP... Error</div>
<div class="t" style="left:19.7px;top:616.0px;font-size:13px;line-height:17px;color:#101010;transform:scaleX(1.039);">13:23:05</div>
<div class="t" style="left:84.5px;top:616.0px;font-size:13px;line-height:17px;color:#be1616;transform:scaleX(0.971);">LBA 89382518 try REMAP... Error</div>
<div class="t" style="left:19.7px;top:633.0px;font-size:13px;line-height:17px;color:#101010;transform:scaleX(1.039);">13:23:37</div>
<div class="t" style="left:84.5px;top:633.0px;font-size:13px;line-height:17px;color:#be1616;transform:scaleX(0.971);">LBA 89382519 try REMAP... Error</div>
<div class="t" style="left:19.7px;top:650.0px;font-size:13px;line-height:17px;color:#101010;transform:scaleX(1.039);">15:55:20</div>
<div class="t" style="left:85.0px;top:649.5px;font-size:16px;line-height:19px;color:#1828c0;transform:scaleX(1.245);">*****</div>
<div class="t" style="left:128.8px;top:650.0px;font-size:13px;line-height:17px;color:#1828c0;transform:scaleX(1.018);">Scan results: Warnings - 0, errors - 16</div>
<div class="t" style="left:357.2px;top:649.5px;font-size:16px;line-height:19px;color:#1828c0;transform:scaleX(1.232);">*****</div>
</body></html>
